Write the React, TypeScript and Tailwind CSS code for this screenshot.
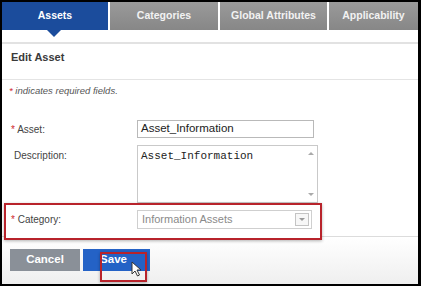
const tabs = [
  { label: 'Assets', width: 'w-[106px]', active: true },
  { label: 'Categories', width: 'w-[108px]', active: false },
  { label: 'Global Attributes', width: 'w-[107px]', active: false },
  { label: 'Applicability', width: 'flex-1', active: false },
];

function Star() {
  return <span className="text-[#d0282e]">*</span>;
}

export default function App() {
  return (
    <div className="h-[286px] w-[421px] bg-black pb-[2px] pl-[2px] pr-[3px] pt-[2px] font-['Liberation_Sans',Arial,sans-serif]">
      <div className="relative flex h-full flex-col overflow-hidden bg-white">
        {/* tabs */}
        <div className="relative flex h-[28px] gap-[2px]">
          {tabs.map((tab) => (
            <div
              key={tab.label}
              className={`${tab.width} flex items-center justify-center text-[10.5px] font-bold ${
                tab.active
                  ? 'bg-[#1b4c9c] text-white'
                  : 'bg-gradient-to-b from-[#9a9a9a] to-[#878787] text-[#f2f2f2]'
              }`}
            >
              {tab.label}
            </div>
          ))}
          <div className="absolute left-[45px] top-[28px] h-0 w-0 border-l-[7px] border-r-[7px] border-t-[7px] border-l-transparent border-r-transparent border-t-[#1b4c9c]" />
        </div>
        <div className="h-[12px]" />
        <div className="h-[2px] bg-[#e2e2e2]" />

        <div className="h-[35px] pl-[9px] pt-[6px] text-[11px] font-bold leading-[14px] text-[#3a3a3a]">
          Edit Asset
        </div>
        <div className="h-px bg-[#e4e4e4]" />

        <div className="pl-[7px] pt-[5px] text-[9.5px] italic leading-[12px] text-[#555]">
          <Star /> indicates required fields.
        </div>

        {/* asset */}
        <div className="mt-[23px] flex items-center pl-[9px]">
          <div className="w-[126px] text-[10px] text-[#444]">
            <Star /> Asset:
          </div>
          <div className="flex h-[18px] w-[177px] items-center border border-[#b9b9b9] pl-[3px] text-[11.5px] text-[#222]">
            Asset_Information
          </div>
        </div>

        {/* description */}
        <div className="mt-[7px] flex pl-[9px]">
          <div className="w-[126px] pl-[3px] pt-[3px] text-[10px] text-[#444]">Description:</div>
          <div className="flex h-[58px] w-[181px] border border-[#c9c9c9]">
            <div className="flex-1 pl-[3px] pt-[3px] font-['Liberation_Mono',monospace] text-[11px] leading-[14px] text-[#222]">
              Asset_Information
            </div>
            <div className="flex w-[12px] flex-col items-center justify-between py-[6px]">
              <div className="h-0 w-0 border-b-[3px] border-l-[3px] border-r-[3px] border-b-[#aaa] border-l-transparent border-r-transparent" />
              <div className="h-0 w-0 border-l-[3px] border-r-[3px] border-t-[3px] border-l-transparent border-r-transparent border-t-[#aaa]" />
            </div>
          </div>
        </div>

        {/* category */}
        <div className="relative h-[34px] border-b border-[#dcdcdc]">
          <div className="absolute left-[2px] top-[0px] flex h-[37px] w-[318px] items-start border-2 border-[#b8232b] bg-white pl-[5px] pt-[5px] shadow-[0_1px_3px_rgba(0,0,0,0.3)]">
            <div className="w-[126px] pt-[2px] text-[10px] text-[#444]">
              <Star /> Category:
            </div>
            <div className="flex h-[19px] w-[175px] items-center justify-between border border-[#cfcfcf] pl-[4px] pr-[2px] text-[11px] text-[#8a8a8a]">
              Information Assets
              <div className="flex h-[13px] w-[14px] items-center justify-center border border-[#c4c4c4] bg-[#f7f7f7]">
                <div className="h-0 w-0 border-l-[3px] border-r-[3px] border-t-[3px] border-l-transparent border-r-transparent border-t-[#999]" />
              </div>
            </div>
          </div>
        </div>

        {/* footer */}
        <div className="flex flex-1 gap-[3px] bg-gradient-to-b from-white to-[#efefef] pl-[8px] pt-[12px]">
          <div className="flex h-[22px] w-[70px] items-center justify-center bg-[#8a9098] text-[11.5px] font-bold text-white">
            Cancel
          </div>
          <div className="relative flex h-[22px] w-[67px] items-center justify-center bg-[#2462c6] pr-[6px] text-[11.5px] font-bold text-white">
            Save
            <div className="absolute left-[17px] top-[3px] h-[30px] w-[47px] border-2 border-[#b8232b] shadow-[0_1px_3px_rgba(0,0,0,0.3)]" />
            <svg className="absolute left-[48px] top-[12px]" width="11" height="16" viewBox="0 0 11 16">
              <path d="M1 1 L1 13 L4 10 L6.5 15 L8.5 14 L6 9 L10 9 Z" fill="white" stroke="#333" strokeWidth="1" strokeLinejoin="round" />
            </svg>
          </div>
        </div>
      </div>
    </div>
  );
}
